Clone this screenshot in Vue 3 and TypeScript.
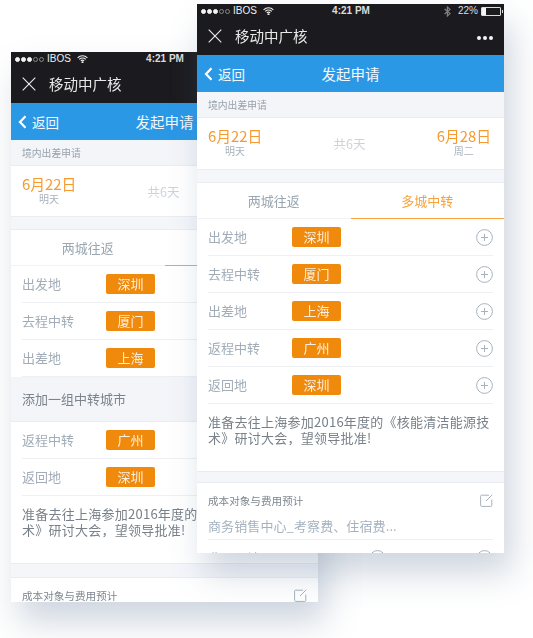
<script setup lang="ts">
interface RowItem {
  label: string
  city?: string
  band?: boolean
}

interface PhoneData {
  id: string
  showEnd: boolean
  rows: RowItem[]
}

const frontRows: RowItem[] = [
  { label: '出发地', city: '深圳' },
  { label: '去程中转', city: '厦门' },
  { label: '出差地', city: '上海' },
  { label: '返程中转', city: '广州' },
  { label: '返回地', city: '深圳' },
]

const backRows: RowItem[] = [
  { label: '出发地', city: '深圳' },
  { label: '去程中转', city: '厦门' },
  { label: '出差地', city: '上海' },
  { label: '添加一组中转城市', band: true },
  { label: '返程中转', city: '广州' },
  { label: '返回地', city: '深圳' },
]

// the back phone is cut off right under the cost heading
const phones: PhoneData[] = [
  { id: 'back', showEnd: false, rows: backRows },
  { id: 'front', showEnd: true, rows: frontRows },
]
</script>

<template>
  <div class="page">
    <section v-for="phone in phones" :key="phone.id" class="phone" :class="phone.id">
      <div class="inner">
        <header class="dark">
          <div class="status">
            <div class="status-left">
              <span class="signal">
                <i class="on"></i><i class="on"></i><i class="on"></i><i></i><i></i>
              </span>
              <span>IBOS</span>
              <svg class="wifi" width="11" height="8" viewBox="0 0 11 8" fill="none" stroke="#eee" stroke-width="1.1">
                <path d="M.6 2.8a7 7 0 0 1 9.8 0" />
                <path d="M2.2 4.4a4.8 4.8 0 0 1 6.6 0" />
                <path d="M3.8 5.9a2.5 2.5 0 0 1 3.4 0" />
                <circle cx="5.5" cy="7.2" r=".5" fill="#eee" />
              </svg>
            </div>
            <span class="time">4:21 PM</span>
            <div class="status-right">
              <svg class="bt" width="7" height="11" viewBox="0 0 7 11" fill="none" stroke="#808080" stroke-width="1.2">
                <path d="M.6 3 6 7.6 3.4 10V1L6 3.4.6 8" />
              </svg>
              <span>22%</span>
              <span class="battery"><i></i></span>
            </div>
          </div>
          <div class="app-bar">
            <svg class="close" width="14" height="14" viewBox="0 0 14 14" stroke="#eee" stroke-width="1.1">
              <path d="M.7.7l12.6 12.6M13.3.7.7 13.3" />
            </svg>
            <span class="app-title">移动中广核</span>
            <span class="more"><i></i><i></i><i></i></span>
          </div>
        </header>

        <div class="blue">
          <div class="back-link">
            <svg width="9" height="14" viewBox="0 0 9 14" fill="none" stroke="#fff" stroke-width="2.2">
              <path d="M7.5 1.2 2 7l5.5 5.8" />
            </svg>
            <span>返回</span>
          </div>
          <span class="blue-title">发起申请</span>
        </div>

        <div class="section-head">境内出差申请</div>

        <div class="dates">
          <div class="date">
            <strong>6月22日</strong>
            <small>明天</small>
          </div>
          <span class="total">共6天</span>
          <div class="date">
            <strong>6月28日</strong>
            <small>周二</small>
          </div>
        </div>

        <div class="gap"></div>

        <div class="tabs">
          <span class="tab">两城往返</span>
          <span class="tab active">多城中转</span>
        </div>

        <template v-for="row in phone.rows" :key="row.label">
          <div v-if="row.band" class="add-band">{{ row.label }}</div>
          <div v-else class="row">
            <span class="label">{{ row.label }}</span>
            <span class="city">{{ row.city }}</span>
            <svg class="circle" width="17" height="17" viewBox="0 0 17 17" fill="none" stroke="#a6b2bd">
              <circle cx="8.5" cy="8.5" r="7.9" />
              <path d="M8.5 5v7M5 8.5h7" />
            </svg>
          </div>
        </template>

        <p class="desc">准备去往上海参加2016年度的《核能清洁能源技术》研讨大会，望领导批准!</p>

        <div class="gap tall"></div>

        <div class="cost">
          <div class="cost-head">
            <span>成本对象与费用预计</span>
            <svg width="13" height="13" viewBox="0 0 13 13" fill="none" stroke="#a6b2bd" stroke-width="1">
              <path d="M9 1.2H1.6a1 1 0 0 0-1 1v9.2a1 1 0 0 0 1 1h9.2a1 1 0 0 0 1-1V5.5" />
              <path d="M12.2.8 6 7" />
            </svg>
          </div>
          <template v-if="phone.showEnd">
            <div class="cost-target">商务销售中心_考察费、住宿费...</div>
            <div class="budget">
              <span class="label">费用预计</span>
              <svg class="circle minus" width="17" height="17" viewBox="0 0 17 17" fill="none" stroke="#a6b2bd">
                <circle cx="8.5" cy="8.5" r="7.9" />
                <path d="M5 8.5h7" />
              </svg>
              <span class="amount">20,000.00</span>
              <svg class="circle" width="17" height="17" viewBox="0 0 17 17" fill="none" stroke="#a6b2bd">
                <circle cx="8.5" cy="8.5" r="7.9" />
                <path d="M8.5 5v7M5 8.5h7" />
              </svg>
            </div>
          </template>
        </div>
      </div>
    </section>
  </div>
</template>

<style scoped>
.page {
  position: relative;
  width: 533px;
  height: 638px;
  overflow: hidden;
  background: #fff;
  font-family: "Noto Sans CJK SC", "Noto Sans", sans-serif;
}

/* the two phones are free floating windows */
.phone {
  position: absolute;
  width: 307px;
  background: #fff;
  box-shadow: 8px 20px 32px rgba(96, 118, 148, 0.3);
}

.back {
  left: 11px;
  top: 52px;
  height: 550px;
}

.front {
  left: 197px;
  top: 4px;
  height: 549px;
}

.inner {
  height: 100%;
  overflow: hidden;
  filter: blur(0.35px);
}

.dark {
  height: 51px;
  background: #1b1b1f;
  color: #eee;
}

.status {
  display: grid;
  grid-template-columns: 1fr auto 1fr;
  align-items: center;
  height: 17px;
  padding: 0 3px 3px 4px;
  box-sizing: border-box;
  font: 10px/1 "Liberation Sans", sans-serif;
}

.status-left,
.status-right {
  display: flex;
  align-items: center;
  gap: 3px;
}

.status-right {
  justify-content: flex-end;
  color: #ddd;
}

.bt {
  margin-right: 4px;
}

.signal {
  display: flex;
  gap: 1px;
}

.signal i {
  width: 5px;
  height: 5px;
  box-sizing: border-box;
  border: 1px solid #888;
  border-radius: 50%;
}

.signal i.on {
  border-color: #f4f4f4;
  background: #f4f4f4;
}

.wifi {
  margin-left: 3px;
}

.time {
  font-weight: 700;
  color: #ddd;
}

.battery {
  position: relative;
  display: block;
  width: 18px;
  height: 7px;
  border: 1px solid #ddd;
  border-radius: 1px;
}

.battery::after {
  content: "";
  position: absolute;
  right: -3px;
  top: 2px;
  width: 1px;
  height: 3px;
  background: #ddd;
}

.battery i {
  display: block;
  width: 4px;
  height: 100%;
  background: #f4f4f4;
}

.app-bar {
  display: flex;
  align-items: center;
  height: 34px;
  padding: 0 11px 5px 11px;
  box-sizing: border-box;
}

.close {
  margin-right: 13px;
}

.app-title {
  font-size: 14.5px;
  color: #e8e8e8;
}

.more {
  display: flex;
  gap: 2px;
  margin-left: auto;
  margin-top: 5px;
}

.more i {
  width: 4px;
  height: 4px;
  border-radius: 50%;
  background: #f4f4f4;
}

.blue {
  position: relative;
  display: flex;
  align-items: center;
  justify-content: center;
  height: 37px;
  background: #2b98e6;
  color: #f2f8fd;
}

.back-link {
  position: absolute;
  left: 7px;
  top: 0;
  bottom: 0;
  display: flex;
  align-items: center;
  gap: 5px;
  font-size: 13.5px;
}

.blue-title {
  font-size: 14.5px;
}

.section-head {
  display: flex;
  align-items: center;
  height: 26px;
  padding-left: 11px;
  background: #f3f5f9;
  border-bottom: 1px solid #e9edf3;
  box-sizing: border-box;
  font-size: 9.8px;
  color: #98a2ad;
}

.dates {
  display: flex;
  align-items: center;
  justify-content: space-between;
  height: 51px;
  padding: 0 13px 3px 11px;
  box-sizing: border-box;
}

.back .dates {
  height: 50px;
}

.date {
  display: flex;
  flex-direction: column;
  align-items: center;
}

.date strong {
  font-size: 14.8px;
  font-weight: 400;
  line-height: 18px;
  color: #f79a2d;
}

.date small {
  font-size: 10px;
  line-height: 12px;
  color: #a9b2bb;
}

.total {
  margin-top: 3px;
  font-size: 12.5px;
  color: #cdd3d9;
}

.gap {
  height: 14px;
  background: #f4f6fa;
  border-top: 1px solid #e9edf3;
  border-bottom: 1px solid #e9edf3;
  box-sizing: border-box;
}

.gap.tall {
  height: 12px;
}

.back .gap.tall {
  height: 15px;
}

.tabs {
  display: grid;
  grid-template-columns: 1fr 1fr;
  height: 36px;
  background: #fff;
  box-shadow: inset 0 -1px #f0f2f5;
}

.tab {
  display: flex;
  align-items: center;
  justify-content: center;
  padding-bottom: 1px;
  font-size: 13px;
  color: #9aa6b1;
}

.tab.active {
  color: #f7a33c;
  box-shadow: inset 0 -1px #f7a33c;
}

.row {
  display: flex;
  align-items: center;
  height: 37px;
  margin: 0 11px;
  border-bottom: 1px solid #eef0f3;
  box-sizing: border-box;
}

.label {
  width: 84px;
  margin-bottom: 2px;
  font-size: 13px;
  color: #a2adb8;
}

.city {
  display: flex;
  align-items: center;
  justify-content: center;
  width: 49px;
  height: 20px;
  padding-bottom: 1px;
  border-radius: 2px;
  background: #f08a0c;
  box-sizing: border-box;
  font-size: 13px;
  color: #fdeedd;
}

.circle {
  margin-left: auto;
}

.add-band {
  display: flex;
  align-items: center;
  height: 45px;
  padding: 0 0 2px 11px;
  background: #f3f5f9;
  box-sizing: border-box;
  border-bottom: 1px solid #e9edf3;
  font-size: 13px;
  color: #7b848d;
}

.desc {
  height: 67px;
  margin: 0;
  padding: 10px 10px 0 11px;
  box-sizing: border-box;
  font-size: 13px;
  line-height: 16px;
  letter-spacing: 0.25px;
  color: #788089;
}

.cost {
  padding: 0 11px;
}

.cost-head {
  display: flex;
  align-items: center;
  justify-content: space-between;
  height: 34px;
  padding-top: 1px;
  box-sizing: border-box;
  font-size: 10.6px;
  color: #7d868f;
}

.cost-target {
  display: flex;
  align-items: center;
  height: 20px;
  padding-bottom: 3px;
  box-sizing: border-box;
  font-size: 13px;
  letter-spacing: 0.1px;
  color: #a4b2bf;
  white-space: nowrap;
}

.budget {
  display: flex;
  align-items: center;
  height: 37px;
  border-top: 1px solid #eef0f3;
  margin-top: 2px;
}

.budget .minus {
  margin-left: 77px;
}

.budget .amount {
  margin: 0 0 3px 11px;
  font-size: 14px;
  color: #f79a2d;
}
</style>
